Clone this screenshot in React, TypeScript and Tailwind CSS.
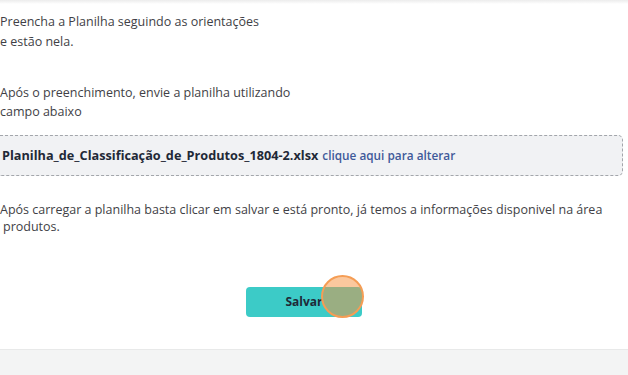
import React from "react";

export default function App() {
  const font = { fontFamily: '"Open Sans", "Noto Sans", sans-serif' };
  return (
    <div className="w-[628px] h-[375px] overflow-hidden bg-white flex flex-col relative" style={font}>
      <div className="h-[4px] bg-gradient-to-b from-[#ececec] to-white" />
      <div className="flex-1 flex flex-col text-[12.5px] text-[#3f3f46]">
        <div className="pt-[8px] leading-[20px]">
          <div>Preencha a Planilha seguindo as orientações</div>
          <div>e estão nela.</div>
        </div>
        <div className="pt-[31px] leading-[19px]">
          <div>Após o preenchimento, envie a planilha utilizando</div>
          <div>campo abaixo</div>
        </div>
        <div className="mt-[14px] mr-[5px] h-[41px] bg-[#f1f2f4] border border-dashed border-l-0 border-[#a3a6ab] rounded-r-[5px] flex items-center pl-[2px]">
          <span className="font-bold text-[12.7px] text-[#1f2937]">Planilha_de_Classificação_de_Produtos_1804-2.xlsx</span>
          <span className="ml-[4px] font-semibold text-[11.8px] text-[#3f5a9a]">clique aqui para alterar</span>
        </div>
        <div className="pt-[25px] leading-[17px]">
          <div>Após carregar a planilha basta clicar em salvar e está pronto, já temos a informações disponivel na área</div>
          <div className="pl-[3px]">produtos.</div>
        </div>
        <div className="flex justify-center pr-[20px] pt-[52px]">
          <button className="w-[116px] h-[30px] rounded-[4px] bg-[#3ccbc7] text-[#1f2937] text-[12px] font-bold">
            Salvar
          </button>
        </div>
      </div>
      <div className="h-[26px] bg-[#f3f4f4] border-t border-[#e8e9e9]" />
      <div className="absolute left-[321px] top-[275px] w-[43px] h-[43px] rounded-full border-2 border-[#f59d55] bg-[#f7913d]/50" />
    </div>
  );
}
